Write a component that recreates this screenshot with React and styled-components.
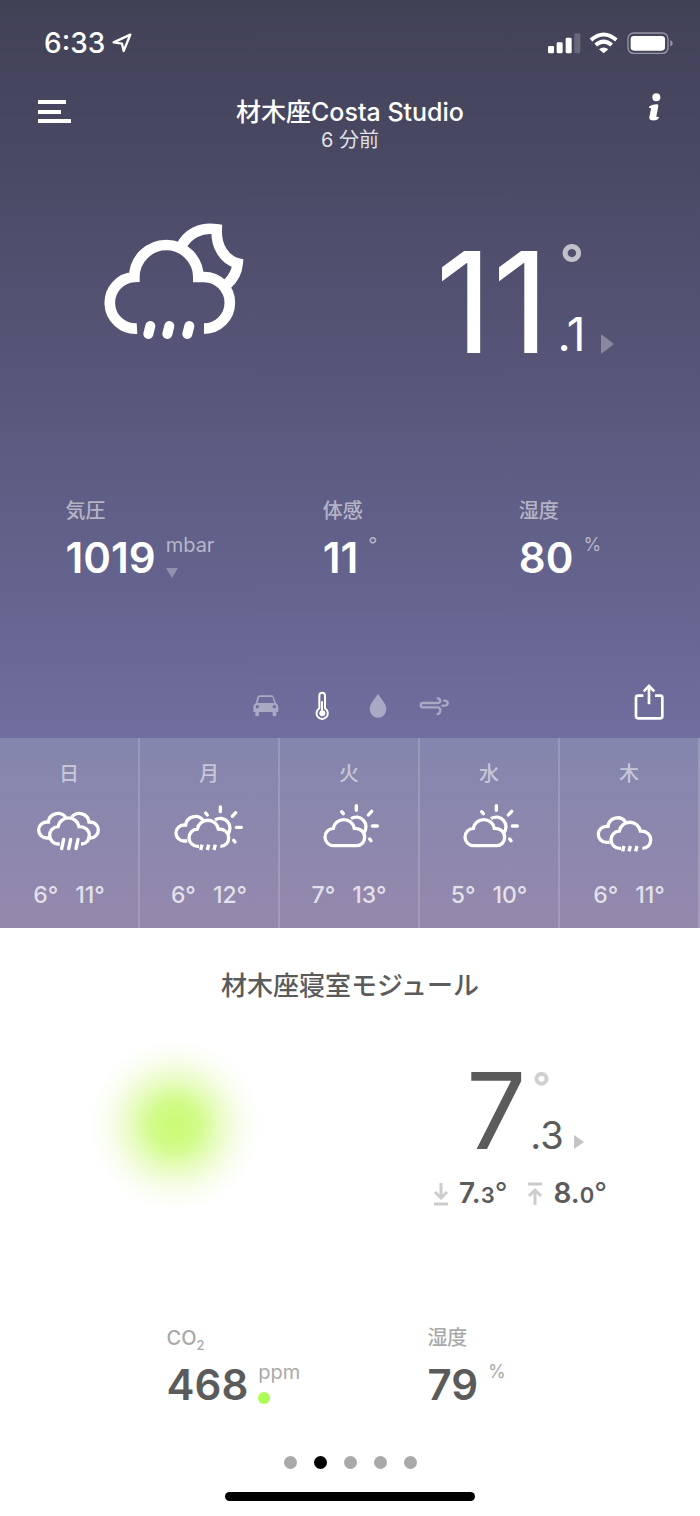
import React, { useState } from "react";
import styled, { createGlobalStyle } from "styled-components";

const forecast = [
  { day: "日", icon: "heavyRain", min: "6°", max: "11°" },
  { day: "月", icon: "sunRain", min: "6°", max: "12°" },
  { day: "火", icon: "sunCloud", min: "7°", max: "13°" },
  { day: "水", icon: "sunCloud", min: "5°", max: "10°" },
  { day: "木", icon: "cloudRain", min: "6°", max: "11°" },
];

const front =
  "M181 323H178A26 26 0 0 1 176 271A32 32 0 0 1 239 271C258 270 270 282 270 298C270 312 260 323 245 323";
const backLeft = "M152 305H142A24 24 0 0 1 142 257H147A29 29 0 0 1 199 243";
const backRight = "M264 305H273A24 24 0 0 0 273 257H269A29 29 0 0 0 217 243";

const Sun = () => (
  <>
    <path d="M227 251A29 29 0 0 1 265 294" />
    <path
      strokeLinecap="round"
      d="M243 212V226M289 229L279 240M291 273H306M283 312L287 317M199 230L204 236"
    />
  </>
);

const WeatherIcon = ({ name }) => (
  <WeatherSvg viewBox="89 188 240 171" aria-hidden="true">
    {name === "heavyRain" && (
      <>
        <path d={front} />
        <path d={backLeft} />
        <path d={backRight} />
        <path strokeLinecap="round" d="M193 309L187 337M214 309L208 337M236 309L230 337" />
      </>
    )}
    {name === "sunRain" && (
      <>
        <path d={front} transform="translate(-2 7)" />
        <path d={backLeft} transform="translate(-8 9)" />
        <Sun />
        <path d="M188 325L184 341M208 325L204 341M228 325L224 341" />
      </>
    )}
    {name === "sunCloud" && (
      <>
        <path d={front + "Z"} transform="translate(-14 5)" />
        <g transform="translate(-12 -4)">
          <Sun />
        </g>
      </>
    )}
    {name === "cloudRain" && (
      <>
        <path d={front} transform="translate(4 13)" />
        <path d={backLeft} transform="translate(-1 13)" />
        <path d="M194 329L190 345M213 329L209 345M233 329L229 345" />
      </>
    )}
  </WeatherSvg>
);

const NightRain = () => (
  <svg width="170" height="150" viewBox="0 0 510 450" fill="none" stroke="#fff" strokeWidth="32" aria-hidden="true">
    <path d="M141 356A77 77 0 0 1 133 201A96 96 0 0 1 325 201H342A77 77 0 0 1 342 356" />
    <path d="M272 112C292 72 332 50 380 58C378 108 402 150 443 160C441 183 430 206 412 222" />
    <path strokeLinecap="round" strokeWidth="30" d="M181 348L175 372M238 348L232 372M298 348L292 372" />
  </svg>
);

const tabs = [
  {
    id: "交通",
    icon: (
      <svg width="30" height="30" viewBox="62 59 90 90" fill="currentColor">
        <path
          fillRule="evenodd"
          d="M84 73Q86 72 90 72H123Q128 72 130 76L137 96Q144 100 144 106V122H138V131Q138 135 134 135H131Q127 135 127 131V122H86V131Q86 135 82 135H79Q75 135 75 131V122H69V106Q69 100 76 96L81 77Q82 74 84 73ZM87 77L81 95H132L126 77ZM81 101A5 5 0 1 0 81 111A5 5 0 1 0 81 101ZM132 101A5 5 0 1 0 132 111A5 5 0 1 0 132 101Z"
        />
      </svg>
    ),
  },
  {
    id: "温度",
    icon: (
      <svg width="30" height="30" viewBox="231 61 90 90" fill="none" stroke="currentColor" strokeWidth="6">
        <path d="M268 113V75A8 8 0 0 1 285 75V113A17 17 0 1 1 268 113Z" />
        <path d="M276 92V120" />
        <circle cx="277" cy="128" r="9" fill="currentColor" stroke="none" />
      </svg>
    ),
  },
  {
    id: "雨量",
    icon: (
      <svg width="30" height="30" viewBox="395 59 90 90" fill="currentColor">
        <path d="M440 68C449 82 465 98 465 113A25 26 0 0 1 415 113C415 98 431 82 440 68Z" />
      </svg>
    ),
  },
  {
    id: "風",
    icon: (
      <svg width="30" height="30" viewBox="568 60 90 90" fill="none" stroke="currentColor" strokeWidth="7" strokeLinecap="round">
        <path d="M624 82C634 83 635 96 624 96H580C571 96 571 109 580 109H624C635 109 634 128 624 129" />
        <path d="M643 89C658 88 657 104 645 104H638" />
      </svg>
    ),
  },
];

const Weather = () => {
  const [active, setActive] = useState("温度");

  return (
    <Sky>
      <StatusBar>
        <Clock>
          6:33
          <svg width="20" height="20" viewBox="0 0 60 60" fill="none" stroke="#fff" strokeWidth="7" strokeLinejoin="round">
            <path d="M5 28L55 5L35 54L30 32Z" />
          </svg>
        </Clock>
        <StatusIcons>
          <svg width="126" height="22" viewBox="592 95 378 66" fill="#fff">
            <rect x="595" y="137" width="18" height="22" rx="4" />
            <rect x="621" y="126" width="18" height="33" rx="4" />
            <rect x="648" y="112" width="18" height="47" rx="4" />
            <rect x="674" y="99" width="18" height="60" rx="4" opacity="0.2" />
            <path d="M762 159L748 147Q762 136 776 147Z" />
            <path d="M738 134Q762 114 786 134" fill="none" stroke="#fff" strokeWidth="12" />
            <path d="M724 119Q762 86 800 119" fill="none" stroke="#fff" strokeWidth="12" />
            <rect x="835" y="98" width="120" height="61" rx="17" fill="none" stroke="#fff" strokeWidth="4" opacity="0.45" />
            <rect x="843" y="107" width="103" height="44" rx="10" />
            <path d="M962 119Q969 123 969 129Q969 135 962 139Z" opacity="0.45" />
          </svg>
        </StatusIcons>
      </StatusBar>

      <Header>
        <IconButton aria-label="メニュー">
          <svg width="33" height="24" viewBox="0 0 33 24" fill="#fff">
            <path d="M0 0H28V4H0ZM0 10H23V14H0ZM0 19H33V23H0Z" />
          </svg>
        </IconButton>
        <Heading>
          <Title>材木座Costa Studio</Title>
          <Updated>6 分前</Updated>
        </Heading>
        <IconButton $end aria-label="情報">
          <svg width="14" height="34" viewBox="896 275 42 102" fill="#fff">
            <circle cx="921" cy="291" r="12" />
            <path d="M900 318Q913 311 924 312Q928 313 927 318L921 348Q921 351 929 350Q929 355 923 358Q913 362 904 359Q899 357 900 351L905 325Q905 322 899 322Z" />
          </svg>
        </IconButton>
      </Header>

      <Hero>
        <NightRain />
        <Reading>
          <Big>11</Big>
          <Aside>
            <Degree>°</Degree>
            <Decimal>
              .1
              <Trend />
            </Decimal>
          </Aside>
        </Reading>
      </Hero>

      <Stats>
        <Stat label="気圧" value="1019" unit="mbar" extra={<TrendDown />} />
        <Stat label="体感" value="11" unit="°" />
        <Stat label="湿度" value="80" unit="%" small />
      </Stats>

      <Toolbar>
        <Tabs>
          {tabs.map((tab) => (
            <Tab
              key={tab.id}
              aria-label={tab.id}
              $active={active === tab.id}
              onClick={() => setActive(tab.id)}
            >
              {tab.icon}
            </Tab>
          ))}
        </Tabs>
        <Share aria-label="共有">
          <svg width="30" height="38" viewBox="1212 34 90 114" fill="none" stroke="#fff" strokeWidth="8">
            <path strokeLinejoin="round" d="M1240 72H1224Q1218 72 1218 78V134Q1218 140 1224 140H1291Q1297 140 1297 134V78Q1297 72 1291 72H1275" />
            <path d="M1257 98V45M1241 59L1257 43L1273 59" />
          </svg>
        </Share>
      </Toolbar>
    </Sky>
  );
};

const Stat = ({ label, value, unit, extra, small, dark }) => (
  <StatBox $dark={dark}>
    <StatLabel>{label}</StatLabel>
    <StatRow>
      <Value>{value}</Value>
      <UnitBox>
        <Unit $small={small}>{unit}</Unit>
        {extra}
      </UnitBox>
    </StatRow>
  </StatBox>
);

const Module = () => {
  const [page, setPage] = useState(1);

  return (
    <Panel>
      <ModuleTitle>材木座寝室モジュール</ModuleTitle>
      <ModuleHero>
        <Glow />
        <Indoor>
          <Reading>
            <Big $dark>7</Big>
            <Aside $dark>
              <Degree $dark>°</Degree>
              <Decimal $dark>
                .3
                <Trend $dark />
              </Decimal>
            </Aside>
          </Reading>
          <MinMax>
            <svg width="16" height="24" viewBox="0 0 16 24" fill="none" stroke="#ccc" strokeWidth="3">
              <path d="M8 1V16M2 10L8 16L14 10M1 22H15" />
            </svg>
            <Limit>
              7.<small>3</small>
              <span>°</span>
            </Limit>
            <svg width="16" height="24" viewBox="0 0 16 24" fill="none" stroke="#ccc" strokeWidth="3">
              <path d="M8 23V8M2 14L8 8L14 14M1 2H15" />
            </svg>
            <Limit>
              8.<small>0</small>
              <span>°</span>
            </Limit>
          </MinMax>
        </Indoor>
      </ModuleHero>
      <ModuleStats>
        <Stat
          dark
          label={
            <>
              CO<sub>2</sub>
            </>
          }
          value="468"
          unit="ppm"
          extra={<Quality />}
        />
        <Stat dark small label="湿度" value="79" unit="%" />
      </ModuleStats>
      <Pager>
        {[...Array(5)].map((_, i) => (
          <Dot
            key={i}
            aria-label={`${i + 1}ページ`}
            $active={i === page}
            onClick={() => setPage(i)}
          />
        ))}
      </Pager>
      <HomeBar />
    </Panel>
  );
};

const App = () => (
  <>
    <GlobalStyle />
    <Weather />
    <Week>
      {forecast.map(({ day, icon, min, max }) => (
        <Day key={day}>
          <DayName>{day}</DayName>
          <WeatherIcon name={icon} />
          <Temps>
            <span>{min}</span>
            <span>{max}</span>
          </Temps>
        </Day>
      ))}
    </Week>
    <Module />
  </>
);

const GlobalStyle = createGlobalStyle`
  * {
    box-sizing: border-box;
  }
  body {
    margin: 0;
    background: #fff;
    font-family: Inter, "Noto Sans CJK JP", sans-serif;
  }
  button {
    padding: 0;
    border: none;
    background: none;
    cursor: pointer;
  }
  svg {
    display: block;
  }
`;

const Sky = styled.header`
  color: #fff;
  background: linear-gradient(#414156, #4a4965 23%, #605f87 70%, #6f6e9e);
`;

const StatusBar = styled.div`
  display: flex;
  align-items: center;
  justify-content: space-between;
  padding: 26px 27px 0 44px;
`;

const Clock = styled.div`
  display: flex;
  align-items: center;
  gap: 7px;
  font-size: 28px;
  font-weight: 500;
  line-height: 34px;
`;

const StatusIcons = styled.div`
  display: flex;
`;

const Header = styled.div`
  display: grid;
  grid-template-columns: 1fr auto 1fr;
  align-items: start;
  padding: 32px 38px 0;
`;

const IconButton = styled.button`
  justify-self: ${({ $end }) => ($end ? "end" : "start")};
  padding-top: ${({ $end }) => ($end ? "0" : "8px")};
`;

const Heading = styled.div`
  padding-top: 2px;
  text-align: center;
`;

const Title = styled.h1`
  margin: 0;
  font-size: 25px;
  font-weight: 500;
  line-height: 36px;
`;

const Updated = styled.div`
  color: rgba(255, 255, 255, 0.85);
  font-size: 20px;
  font-weight: 400;
  line-height: 20px;
`;

const Hero = styled.section`
  display: grid;
  grid-template-columns: 1fr 1fr;
  align-items: end;
  justify-items: center;
  padding-top: 60px;
`;

const Reading = styled.div`
  display: flex;
  align-items: stretch;
`;

const Big = styled.div`
  font-size: ${({ $dark }) => ($dark ? "106px" : "140px")};
  font-weight: 400;
  line-height: ${({ $dark }) => ($dark ? "88px" : "116px")};
`;

const Aside = styled.div`
  display: flex;
  flex-direction: column;
  justify-content: space-between;
  padding: ${({ $dark }) => ($dark ? "0 0 0 4px" : "0 0 6px 8px")};
`;

const Degree = styled.span`
  padding-left: 2px;
  color: ${({ $dark }) => ($dark ? "#d0d0d0" : "rgba(255, 255, 255, 0.65)")};
  font-size: ${({ $dark }) => ($dark ? "40px" : "54px")};
  font-weight: 600;
  line-height: 40px;
`;

const Decimal = styled.div`
  display: flex;
  align-items: flex-end;
  gap: ${({ $dark }) => ($dark ? "10px" : "16px")};
  font-size: ${({ $dark }) => ($dark ? "38px" : "46px")};
  line-height: 40px;
`;

const Trend = styled.i`
  margin-bottom: ${({ $dark }) => ($dark ? "6px" : "0")};
  border: solid transparent;
  border-width: ${({ $dark }) => ($dark ? "7px 0 7px 10px" : "10px 0 10px 13px")};
  border-left-color: ${({ $dark }) => ($dark ? "#c4c4c4" : "rgba(255, 255, 255, 0.3)")};
`;

const Stats = styled.section`
  display: grid;
  grid-template-columns: repeat(3, 1fr);
  justify-items: center;
  padding: 139px 5% 0;
`;

const StatBox = styled.div`
  --muted: ${({ $dark }) => ($dark ? "#a9a9a9" : "rgba(255, 255, 255, 0.55)")};
  color: ${({ $dark }) => ($dark ? "#5b5b5b" : "#fff")};
`;

const StatLabel = styled.div`
  color: var(--muted);
  font-size: 20px;
  font-weight: 500;
  line-height: 24px;

  sub {
    font-size: 13px;
    line-height: 0;
    vertical-align: -5px;
  }
`;

const StatRow = styled.div`
  display: flex;
  gap: 10px;
  padding-top: 11px;
`;

const Value = styled.div`
  font-size: 42px;
  font-weight: 600;
  line-height: 48px;
`;

const UnitBox = styled.div`
  display: flex;
  flex-direction: column;
  gap: 9px;
`;

const Unit = styled.span`
  color: var(--muted);
  font-size: ${({ $small }) => ($small ? "18px" : "20px")};
  font-weight: 400;
  line-height: 22px;
`;

const TrendDown = styled.i`
  width: 12px;
  border: solid transparent;
  border-width: 10px 6px 0;
  border-top-color: rgba(255, 255, 255, 0.3);
  margin-top: 3px;
`;

const Toolbar = styled.nav`
  display: grid;
  grid-template-columns: 1fr auto 1fr;
  align-items: center;
  height: 64px;
  margin-top: 92px;
  padding: 0 36px;
`;

const Tabs = styled.div`
  display: flex;
  grid-column: 2;
`;

const Tab = styled.button`
  display: flex;
  justify-content: center;
  width: 56px;
  color: ${({ $active }) => ($active ? "#fff" : "rgba(255, 255, 255, 0.42)")};
`;

const Share = styled.button`
  justify-self: end;
  padding-bottom: 8px;
`;

const Week = styled.section`
  display: grid;
  grid-template-columns: repeat(5, 1fr);
  color: #fff;
  background: linear-gradient(#8486ad, #9588ad);
`;

const Day = styled.div`
  display: flex;
  flex-direction: column;
  align-items: center;
  padding: 24px 0 19px;
  border-right: 2px solid rgba(255, 255, 255, 0.16);
`;

const DayName = styled.div`
  color: rgba(255, 255, 255, 0.55);
  font-size: 20px;
  font-weight: 500;
  line-height: 24px;
`;

const WeatherSvg = styled.svg`
  width: 80px;
  height: 57px;
  margin: 13px 0 25px;
  fill: none;
  stroke: #fff;
  stroke-width: 10;
`;

const Temps = styled.div`
  display: flex;
  gap: 17px;
  color: rgba(255, 255, 255, 0.75);
  font-size: 23px;
  font-weight: 500;
  line-height: 28px;
`;

const Panel = styled.main`
  padding: 40px 0 15px;
  color: #5b5b5b;
`;

const ModuleTitle = styled.h2`
  margin: 0;
  font-size: 26px;
  font-weight: 500;
  line-height: 36px;
  text-align: center;
`;

const ModuleHero = styled.section`
  display: grid;
  grid-template-columns: 1fr 1fr;
  justify-items: center;
  align-items: center;
  padding-top: 36px;
`;

const Glow = styled.div`
  width: 170px;
  height: 170px;
  background: radial-gradient(closest-side, #c9fb74, #d2fb8a 28%, #e8fcc2 52%, #f8fded 76%, #fff);
`;

const Indoor = styled.div`
  display: flex;
  flex-direction: column;
  align-items: center;
  gap: 23px;
  padding-top: 27px;
`;

const MinMax = styled.div`
  display: flex;
  align-items: center;
  gap: 10px;
`;

const Limit = styled.div`
  margin-right: 10px;
  font-size: 28px;
  font-weight: 600;
  line-height: 30px;

  small {
    font-size: 22px;
  }

  span {
    font-weight: 400;
  }
`;

const ModuleStats = styled.section`
  display: grid;
  grid-template-columns: 1fr 1fr;
  justify-items: center;
  width: 66.6%;
  margin: 0 auto;
  padding-top: 116px;
`;

const Quality = styled.i`
  width: 12px;
  height: 12px;
  border-radius: 50%;
  background: #adfb55;
`;

const Pager = styled.div`
  display: flex;
  justify-content: center;
  gap: 17px;
  padding-top: 47px;
`;

const Dot = styled.button`
  && {
    width: 13px;
    height: 13px;
    border-radius: 50%;
    background: ${({ $active }) => ($active ? "#000" : "#a9a9a9")};
  }
`;

const HomeBar = styled.div`
  width: 250px;
  height: 9px;
  margin: 23px auto 0;
  border-radius: 5px;
  background: #000;
`;

export default App;
